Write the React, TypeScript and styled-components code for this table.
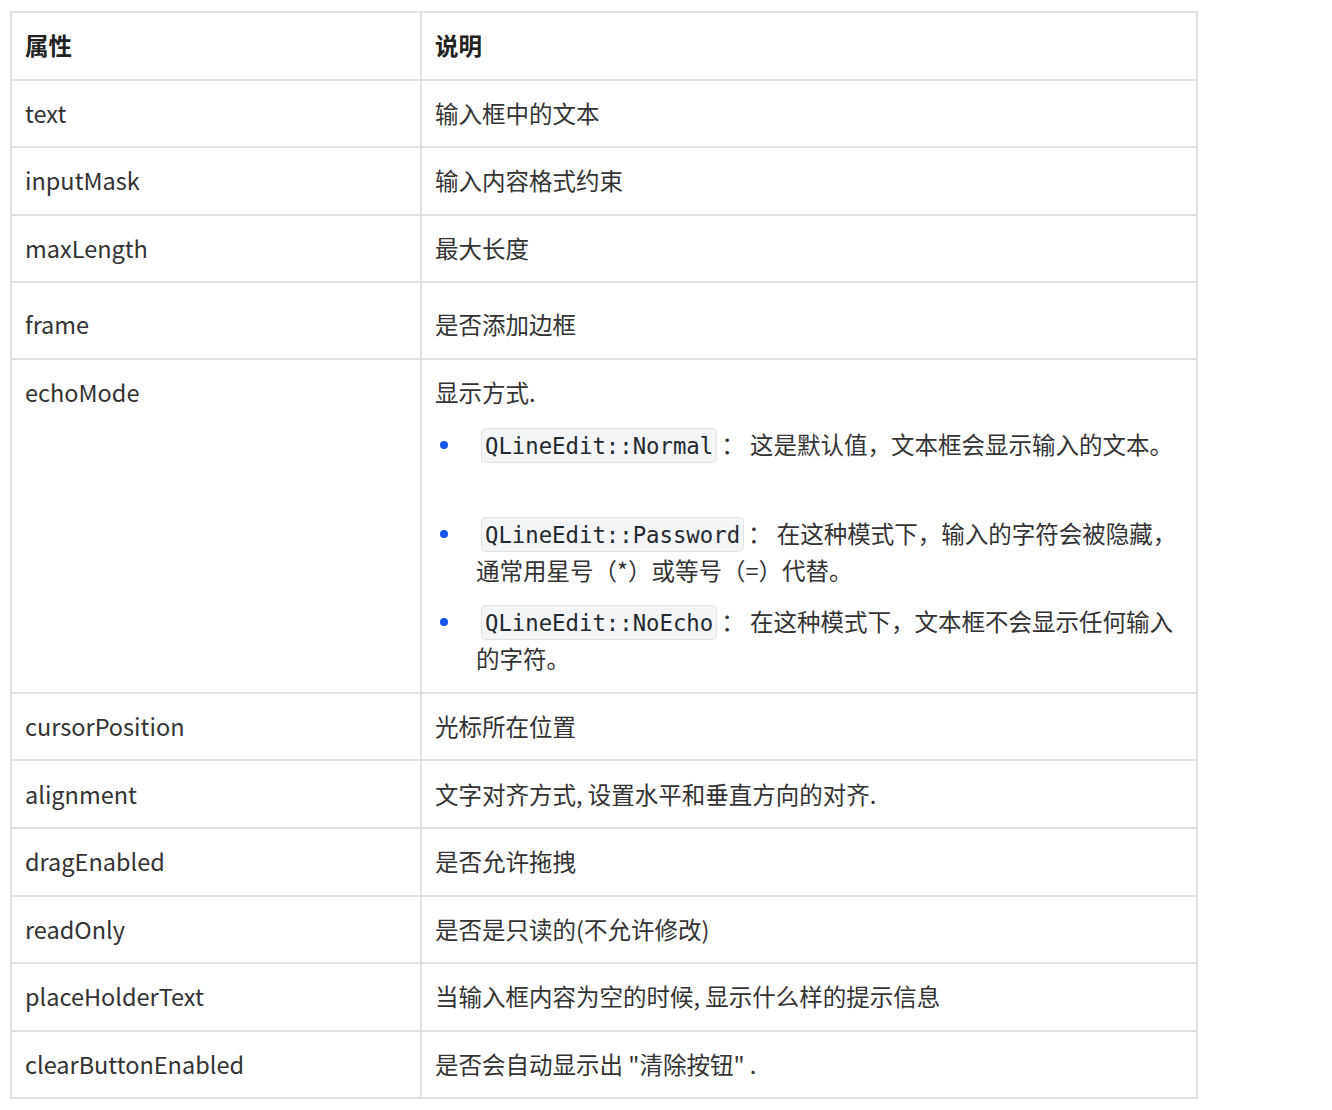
import { FC, ReactNode } from 'react';
import styled, { createGlobalStyle } from 'styled-components';

const GlobalStyle = createGlobalStyle`
  html, body {
    margin: 0;
    padding: 0;
    background: #ffffff;
  }
  body {
    font-family: "Noto Sans CJK SC", "Noto Sans", sans-serif;
    color: #333333;
  }
`;

const Page = styled.div`
  padding: 11px 0 0 10px;
`;

const Table = styled.table`
  width: 1188px;
  border-collapse: collapse;
  table-layout: fixed;
  font-size: 23.5px;
  line-height: 37px;
`;

const HeadCell = styled.th`
  border: 2px solid #e1e1e5;
  padding: 14.3px 13px;
  text-align: left;
  font-weight: 700;
  color: #222222;
`;

const Cell = styled.td<{ $tall?: boolean }>`
  border: 2px solid #e1e1e5;
  padding: ${(p) => (p.$tall ? '23px 13px 14.8px' : '14.3px 13px')};
  vertical-align: top;
  font-weight: 400;
`;

const List = styled.ul`
  list-style: none;
  margin: 15px 0 0;
  padding: 0;
`;

const Item = styled.li<{ $blankLine?: boolean }>`
  display: flex;
  margin-bottom: 14.5px;
  min-height: ${(p) => (p.$blankLine ? '74px' : 'auto')};
  &:last-child {
    margin-bottom: 0;
  }
`;

const Marker = styled.span`
  box-sizing: border-box;
  flex: 0 0 41px;
  display: flex;
  align-items: flex-start;
  padding-top: 15px;
  padding-left: 5px;
  &::before {
    content: '';
    width: 8px;
    height: 8px;
    border-radius: 50%;
    background: #1557f2;
  }
`;

const ItemText = styled.span`
  flex: 1;
`;

const Code = styled.code`
  font-family: "DejaVu Sans Mono", "Liberation Mono", monospace;
  font-size: 22.3px;
  line-height: 1;
  margin: 0 4px 0 5px;
  padding: 4px 3px 3px;
  background: #f4f5f7;
  border: 1px solid #e0e2e6;
  border-radius: 5px;
  color: #24292f;
`;

interface RowProps {
  name: string;
  tall?: boolean;
  children: ReactNode;
}

const Row: FC<RowProps> = ({ name, tall, children }) => (
  <tr>
    <Cell $tall={tall}>{name}</Cell>
    <Cell $tall={tall}>{children}</Cell>
  </tr>
);

const rows: { name: string; desc: string; tall?: boolean }[] = [
  { name: 'text', desc: '输入框中的文本' },
  { name: 'inputMask', desc: '输入内容格式约束' },
  { name: 'maxLength', desc: '最大长度' },
  { name: 'frame', desc: '是否添加边框', tall: true },
];

const rowsAfter: { name: string; desc: string }[] = [
  { name: 'cursorPosition', desc: '光标所在位置' },
  { name: 'alignment', desc: '文字对齐方式, 设置水平和垂直方向的对齐.' },
  { name: 'dragEnabled', desc: '是否允许拖拽' },
  { name: 'readOnly', desc: '是否是只读的(不允许修改)' },
  { name: 'placeHolderText', desc: '当输入框内容为空的时候, 显示什么样的提示信息' },
  { name: 'clearButtonEnabled', desc: '是否会自动显示出 "清除按钮" .' },
];

const App: FC = () => (
  <Page>
    <GlobalStyle />
    <Table>
      <colgroup>
        <col style={{ width: 410 }} />
        <col />
      </colgroup>
      <thead>
        <tr>
          <HeadCell>属性</HeadCell>
          <HeadCell>说明</HeadCell>
        </tr>
      </thead>
      <tbody>
        {rows.map((r) => (
          <Row key={r.name} name={r.name} tall={r.tall}>
            {r.desc}
          </Row>
        ))}
        <Row name="echoMode">
          显示方式.
          <List>
            <Item $blankLine>
              <Marker />
              <ItemText>
                <Code>QLineEdit::Normal</Code>： 这是默认值，文本框会显示输入的文本。
              </ItemText>
            </Item>
            <Item>
              <Marker />
              <ItemText>
                <Code>QLineEdit::Password</Code>： 在这种模式下，输入的字符会被隐藏，通常用星号（*）或等号（=）代替。
              </ItemText>
            </Item>
            <Item>
              <Marker />
              <ItemText>
                <Code>QLineEdit::NoEcho</Code>： 在这种模式下，文本框不会显示任何输入的字符。
              </ItemText>
            </Item>
          </List>
        </Row>
        {rowsAfter.map((r) => (
          <Row key={r.name} name={r.name}>
            {r.desc}
          </Row>
        ))}
      </tbody>
    </Table>
  </Page>
);

export default App;
